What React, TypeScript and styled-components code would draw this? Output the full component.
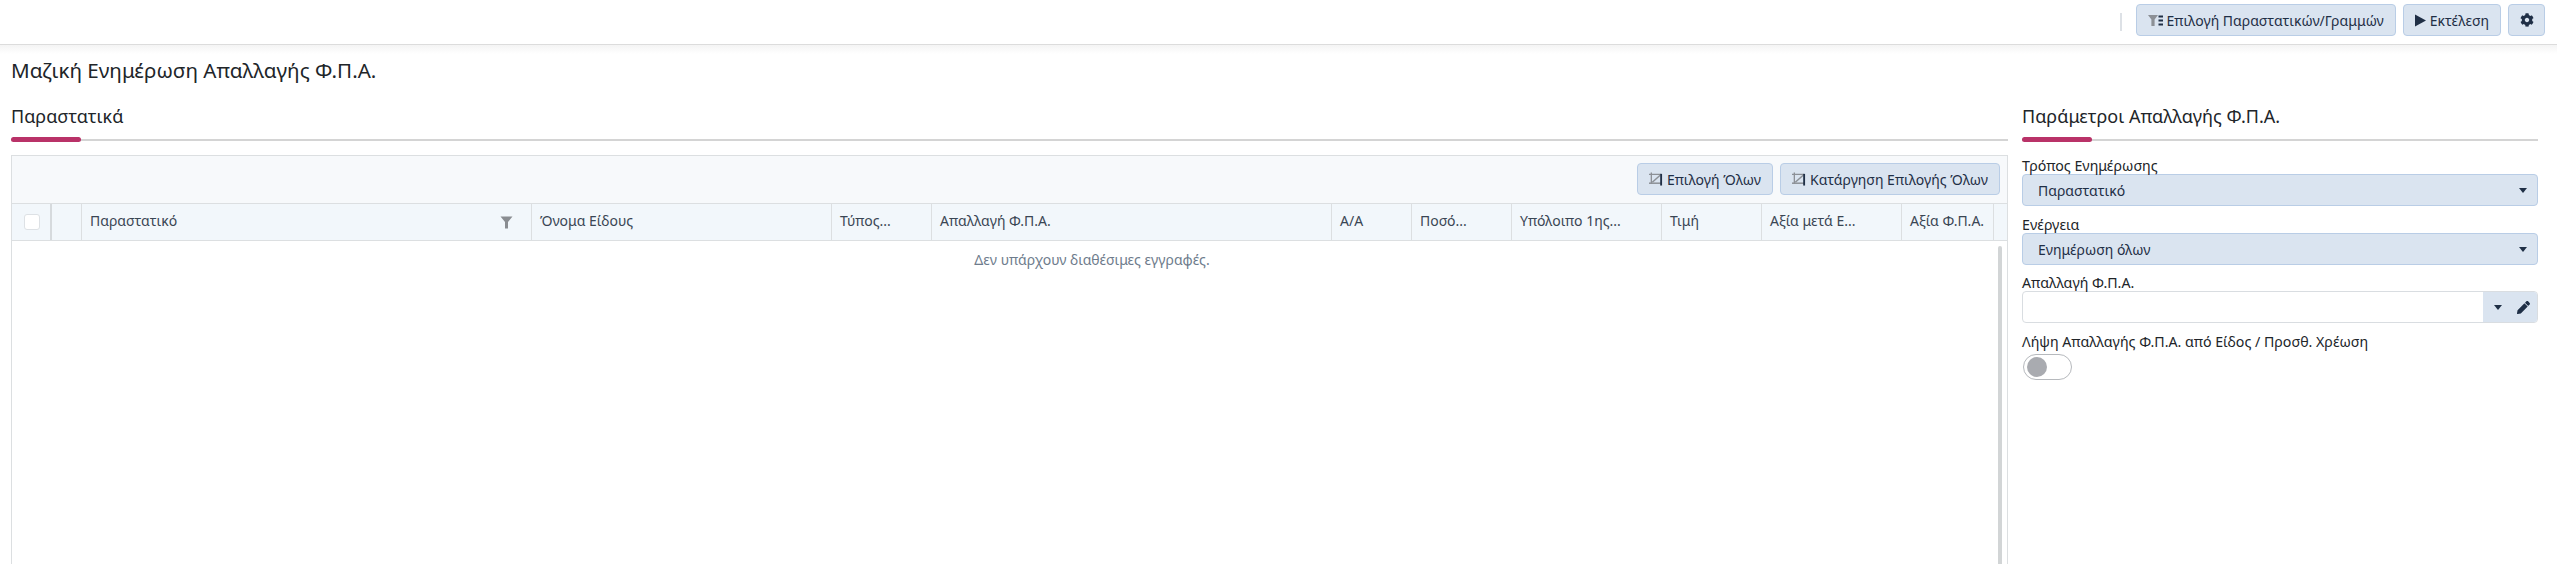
import React from "react";
import styled, { createGlobalStyle } from "styled-components";

const GlobalStyle = createGlobalStyle`
  html, body {
    margin: 0;
    height: 100%;
    background: #fff;
    overflow: hidden;
  }
  body {
    font-family: "Noto Sans", "Liberation Sans", sans-serif;
    font-size: 14px;
    color: #212529;
  }
  * {
    box-sizing: border-box;
  }
`;

const Page = styled.div`
  display: flex;
  flex-direction: column;
  height: 564px;
  overflow: hidden;
`;

const TopBar = styled.header`
  flex: none;
  display: flex;
  align-items: flex-start;
  justify-content: flex-end;
  gap: 7px;
  height: 45px;
  padding: 4px 12px 0 0;
  border-bottom: 1px solid #dcdcdc;
`;

const Divider = styled.div`
  width: 2px;
  height: 18px;
  margin: 9px 7px 0 0;
  background: #dde1e6;
`;

const Button = styled.button<{ $square?: boolean }>`
  display: inline-flex;
  align-items: center;
  justify-content: center;
  gap: 4px;
  height: 32px;
  padding: 0 ${(p) => (p.$square ? "0" : "11px")};
  width: ${(p) => (p.$square ? "37px" : "auto")};
  font-family: inherit;
  font-size: 14px;
  color: #1f2f46;
  background: #dae4f0;
  border: 1px solid #b9cde6;
  border-radius: 4px;
  white-space: nowrap;
`;

const Shade = styled.div`
  flex: none;
  height: 9px;
  margin-bottom: -9px;
  background: linear-gradient(#f4f4f4, #fff);
`;

const Title = styled.h1`
  flex: none;
  margin: 0;
  padding: 12px 11px 0;
  height: 54px;
  font-size: 20.6px;
  line-height: 27px;
  font-weight: 400;
`;

const Content = styled.div`
  flex: 1;
  min-height: 0;
  display: flex;
`;

const Main = styled.main`
  flex: none;
  width: 1997px;
  margin-left: 11px;
  display: flex;
  flex-direction: column;
`;

const Side = styled.aside`
  flex: 1;
  padding: 0 19px 0 14px;
`;

const SectionHead = styled.div`
  position: relative;
  height: 42px;
  border-bottom: 2px solid #d4d4d4;
  font-size: 18px;
  line-height: 24px;
  padding-top: 5px;
`;

const Accent = styled.span`
  position: absolute;
  left: 0;
  bottom: -3px;
  width: ${(p: { $w: number }) => p.$w}px;
  height: 5px;
  border-radius: 3px;
  background: #b93268;
`;

const Grid = styled.div`
  flex: 1;
  min-height: 0;
  display: flex;
  flex-direction: column;
  margin-top: 14px;
  border: 1px solid #dcdfe1;
  border-bottom: none;
  overflow: hidden;
`;

const GridToolbar = styled.div`
  flex: none;
  display: flex;
  justify-content: flex-end;
  gap: 7px;
  height: 48px;
  padding: 7px 7px 0 0;
  background: #f7f9fb;
  border-bottom: 1px solid #dcdfe1;
`;

const HeaderRow = styled.div`
  flex: none;
  display: flex;
  height: 37px;
  background: #f2f7fb;
  border-bottom: 1px solid #dcdfe1;
`;

const HeaderCell = styled.div<{ $w: number }>`
  flex: none;
  display: flex;
  align-items: center;
  justify-content: space-between;
  width: ${(p) => p.$w}px;
  padding: 0 8px 4px;
  font-size: 14px;
  color: #3a4654;
  border-right: 1px solid #dcdfe1;
  white-space: nowrap;
`;

const CheckCell = styled(HeaderCell)`
  padding: 0 0 0 12px;
  border-right: 2px solid #d6dadd;
`;

const CheckBox = styled.span`
  width: 16px;
  height: 16px;
  background: #fff;
  border: 1px solid #dde1e5;
  border-radius: 3px;
`;

const FilterSlot = styled.span`
  display: flex;
  margin: 4px 10px 0 0;
`;

const GridBody = styled.div`
  flex: 1;
  position: relative;
  min-height: 0;
  overflow: hidden;
`;

const EmptyMessage = styled.div`
  width: 2160px;
  padding-top: 9px;
  text-align: center;
  font-size: 14px;
  line-height: 19px;
  color: #6e7c8c;
`;

const ScrollThumb = styled.div`
  position: absolute;
  top: 5px;
  bottom: 0;
  right: 5px;
  width: 4px;
  background: #d2d5d6;
  border-radius: 2px 2px 0 0;
`;

const Field = styled.div`
  margin-top: ${(p: { $gap?: number }) => p.$gap ?? 0}px;
`;

const Label = styled.div`
  font-size: 14.2px;
  line-height: 18px;
  height: 17px;
`;

const SelectBox = styled.div`
  display: flex;
  align-items: center;
  justify-content: space-between;
  height: 32px;
  padding: 0 10px 0 15px;
  font-size: 14px;
  color: #1f2f46;
  background: #dae4f0;
  border: 1px solid #b9cde6;
  border-radius: 4px;
`;

const InputBox = styled.div`
  display: flex;
  justify-content: flex-end;
  height: 32px;
  background: #fff;
  border: 1px solid #d9dde1;
  border-radius: 4px;
  overflow: hidden;
`;

const Append = styled.div`
  width: 54px;
  display: flex;
  align-items: center;
  justify-content: space-between;
  padding: 0 7px 0 11px;
  background: #dae4f0;
`;

const Toggle = styled.div`
  width: 49px;
  height: 26px;
  margin: 4px 0 0 1px;
  padding: 2px 3px;
  border: 1px solid #b6b9bd;
  border-radius: 13px;
  background: #fff;
`;

const Knob = styled.div`
  width: 20px;
  height: 20px;
  border-radius: 50%;
  background: #a9abb0;
`;

const Caret = () => (
  <svg width="8" height="5" viewBox="0 0 8 5">
    <path d="M0 0h8L4 5z" fill="#1f2f46" />
  </svg>
);

const FilterIcon = () => (
  <svg width="13" height="13" viewBox="0 0 13 13">
    <path d="M0.5 0.5h12L8 6v6.5H5V6z" fill="#8a8d91" />
  </svg>
);

const FilterRowsIcon = () => (
  <svg width="15" height="11" viewBox="0 0 15 11">
    <path d="M0 0h10L6.6 4.4V11H3.4V4.4z" fill="#8c9096" />
    <path d="M10.5 0.5h4.5v2h-4.5zM10.5 4.5h4.5v2h-4.5zM10.5 8.5h4.5v2h-4.5z" fill="#1f2f46" />
  </svg>
);

const PlayIcon = () => (
  <svg width="11" height="13" viewBox="0 0 11 13">
    <path d="M0 0.5L11 6.5L0 12.5z" fill="#1f2f46" />
  </svg>
);

const GearIcon = () => (
  <svg width="14" height="14" viewBox="0 0 512 512">
    <path
      fill="#1f2f46"
      d="M487 316l-42-25c4-23 4-47 0-70l42-25c5-3 7-9 5-14-11-35-30-67-54-93-4-4-10-5-15-2l-42 24c-18-15-38-27-60-35V28c0-6-4-11-9-12-36-8-74-8-109 0-5 1-9 6-9 12v49c-22 8-42 20-60 35L92 88c-5-3-11-2-15 2-24 26-43 58-54 93-2 5 0 11 5 14l42 25c-4 23-4 47 0 70l-42 25c-5 3-7 9-5 14 11 35 30 67 54 93 4 4 10 5 15 2l42-24c18 15 38 27 60 35v49c0 6 4 11 9 12 36 8 74 8 109 0 5-1 9-6 9-12v-49c22-8 42-20 60-35l42 24c5 3 11 2 15-2 24-26 43-58 54-93 2-5 0-11-5-14zM256 336c-44 0-80-36-80-80s36-80 80-80 80 36 80 80-36 80-80 80z"
    />
  </svg>
);

const SelectAllIcon = () => (
  <svg width="14" height="14" viewBox="0 0 15 14">
    <path d="M0 2h13M2.5 0v12" stroke="#8c9096" strokeWidth="1.4" fill="none" />
    <path d="M0 11.5h13" stroke="#8c9096" strokeWidth="1.6" />
    <path d="M3.5 10.5L12 3" stroke="#8c9096" strokeWidth="1.6" />
    <path d="M12 1.5h2V14h-2z" fill="#1f2f46" />
  </svg>
);

const PencilIcon = () => (
  <svg width="13" height="13" viewBox="0 0 512 512">
    <path
      fill="#1f2f46"
      d="M497.9 142.1l-46.1 46.1c-4.7 4.7-12.3 4.7-17 0l-111-111c-4.7-4.7-4.7-12.3 0-17l46.1-46.1c18.7-18.7 49.1-18.7 67.9 0l60.1 60.1c18.8 18.7 18.8 49.1 0 67.9zM284.2 99.8L21.6 362.4.4 483.9c-2.9 16.4 11.4 30.6 27.8 27.8l121.5-21.3 262.6-262.6c4.7-4.7 4.7-12.3 0-17l-111-111c-4.8-4.7-12.4-4.7-17.1 0z"
    />
  </svg>
);

const columns: { label: string; w: number; filter?: boolean }[] = [
  { label: "", w: 30 },
  { label: "Παραστατικό", w: 450, filter: true },
  { label: "Όνομα Είδους", w: 300 },
  { label: "Τύπος...", w: 100 },
  { label: "Απαλλαγή Φ.Π.Α.", w: 400 },
  { label: "Α/Α", w: 80 },
  { label: "Ποσό...", w: 100 },
  { label: "Υπόλοιπο 1ης...", w: 150 },
  { label: "Τιμή", w: 100 },
  { label: "Αξία μετά Ε...", w: 140 },
  { label: "Αξία Φ.Π.Α.", w: 92 },
];

export default function App() {
  return (
    <>
      <GlobalStyle />
      <Page>
        <TopBar>
          <Divider />
          <Button>
            <FilterRowsIcon />
            Επιλογή Παραστατικών/Γραμμών
          </Button>
          <Button>
            <PlayIcon />
            Εκτέλεση
          </Button>
          <Button $square>
            <GearIcon />
          </Button>
        </TopBar>
        <Shade />
        <Title>Μαζική Ενημέρωση Απαλλαγής Φ.Π.Α.</Title>
        <Content>
          <Main>
            <SectionHead>
              Παραστατικά
              <Accent $w={70} />
            </SectionHead>
            <Grid>
              <GridToolbar>
                <Button>
                  <SelectAllIcon />
                  Επιλογή Όλων
                </Button>
                <Button>
                  <SelectAllIcon />
                  Κατάργηση Επιλογής Όλων
                </Button>
              </GridToolbar>
              <HeaderRow>
                <CheckCell $w={40}>
                  <CheckBox />
                </CheckCell>
                {columns.map((c) => (
                  <HeaderCell key={c.label} $w={c.w}>
                    {c.label}
                    {c.filter && (
                      <FilterSlot>
                        <FilterIcon />
                      </FilterSlot>
                    )}
                  </HeaderCell>
                ))}
              </HeaderRow>
              <GridBody>
                <EmptyMessage>Δεν υπάρχουν διαθέσιμες εγγραφές.</EmptyMessage>
                <ScrollThumb />
              </GridBody>
            </Grid>
          </Main>
          <Side>
            <SectionHead>
              Παράμετροι Απαλλαγής Φ.Π.Α.
              <Accent $w={70} />
            </SectionHead>
            <Field $gap={16}>
              <Label>Τρόπος Ενημέρωσης</Label>
              <SelectBox>
                Παραστατικό
                <Caret />
              </SelectBox>
            </Field>
            <Field $gap={10}>
              <Label>Ενέργεια</Label>
              <SelectBox>
                Ενημέρωση όλων
                <Caret />
              </SelectBox>
            </Field>
            <Field $gap={9}>
              <Label>Απαλλαγή Φ.Π.Α.</Label>
              <InputBox>
                <Append>
                  <Caret />
                  <PencilIcon />
                </Append>
              </InputBox>
            </Field>
            <Field $gap={10}>
              <Label>Λήψη Απαλλαγής Φ.Π.Α. από Είδος / Προσθ. Χρέωση</Label>
              <Toggle>
                <Knob />
              </Toggle>
            </Field>
          </Side>
        </Content>
      </Page>
    </>
  );
}
